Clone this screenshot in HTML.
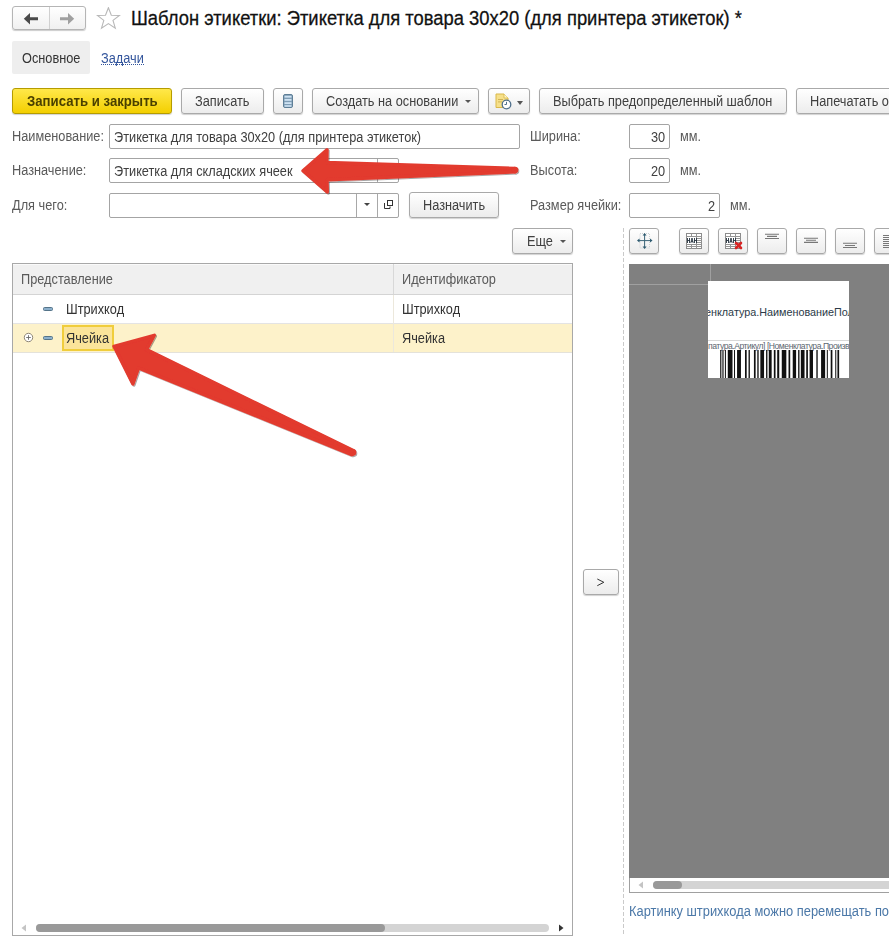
<!DOCTYPE html>
<html><head><meta charset="utf-8">
<style>
*{box-sizing:border-box}
html,body{margin:0;padding:0;width:889px;height:948px;overflow:hidden;background:#fff;font-family:"Liberation Sans",sans-serif;font-size:12.75px;color:#333}
.a{position:absolute}
.btn{position:absolute;height:26px;border:1px solid #a9a9a9;border-radius:3px;background:linear-gradient(#fff,#ececec);box-shadow:0 1px 1px rgba(0,0,0,.18);color:#404040;line-height:26px;text-align:center;white-space:nowrap}
.lbl{position:absolute;color:#5a5a5a;white-space:nowrap;line-height:16px}
.inp{position:absolute;height:25px;border:1px solid #a4a4a4;border-radius:2px;background:#fff;color:#404040;line-height:23px;padding-left:4px;white-space:nowrap;overflow:hidden}
.dd{position:absolute;width:0;height:0;border-left:3px solid transparent;border-right:3px solid transparent;border-top:3px solid #555}
.tb{position:absolute;top:228px;width:30px;height:26px;border:1px solid #a9a9a9;border-radius:3px;background:linear-gradient(#fff,#ececec);box-shadow:0 1px 1px rgba(0,0,0,.18)}
.t{display:inline-block;line-height:16px;will-change:transform;transform:translateY(0.8px) scaleY(1.12);transform-origin:50% 8px}
.btn .t{transform:translateY(-0.6px) scaleY(1.12)}
</style></head><body>

<!-- nav -->
<div class="a" style="left:12px;top:6px;width:74px;height:24px;border:1px solid #b5b5b5;border-radius:3px;background:linear-gradient(#fff,#f0f0f0);box-shadow:0 1px 1px rgba(0,0,0,.2)"></div>
<div class="a" style="left:49px;top:7px;width:1px;height:22px;background:#d0d0d0"></div>
<svg class="a" style="left:20px;top:10px" width="22" height="16" viewBox="0 0 22 16"><path d="M3.8 8.7 L10 3 L10 7.2 L18 7.2 L18 10.2 L10 10.2 L10 14.4 Z" fill="#4a4a4a"/></svg>
<svg class="a" style="left:56px;top:10px" width="22" height="16" viewBox="0 0 22 16"><path d="M18.2 8.7 L12 3 L12 7.2 L4 7.2 L4 10.2 L12 10.2 L12 14.4 Z" fill="#a0a0a0"/></svg>
<svg class="a" style="left:96px;top:7px" width="26" height="24" viewBox="0.6 0.8 26 24"><path d="M13 1.5 L15.9 9 L24 9.2 L17.6 14.2 L19.9 22 L13 17.4 L6.1 22 L8.4 14.2 L2 9.2 L10.1 9 Z" fill="none" stroke="#b8b8b8" stroke-width="1.1"/></svg>
<div class="a" style="left:131px;top:8px;font-size:18.4px;color:#111;white-space:nowrap;line-height:22px;-webkit-text-stroke:0.25px #111;transform:scaleY(1.06);transform-origin:0 18px">Шаблон этикетки: Этикетка для товара 30x20 (для принтера этикеток) *</div>

<!-- tabs -->
<div class="a" style="left:12px;top:41px;width:78px;height:33px;background:#eeeeee;border-radius:2px"></div>
<div class="a" style="left:22px;top:50px;color:#333;line-height:16px"><span class="t">Основное</span></div>
<div class="a" style="left:101px;top:50px;color:#33559c;line-height:16px;border-bottom:1px dotted #33559c;height:15px"><span class="t">Задачи</span></div>

<!-- toolbar -->
<div class="btn" style="left:12px;top:88px;width:160px;background:linear-gradient(#ffe84a,#f3cf00);border-color:#b59c00;font-weight:bold;color:#4a4000;font-size:13.2px"><span class="t">Записать и закрыть</span></div>
<div class="btn" style="left:181px;top:88px;width:83px"><span class="t">Записать</span></div>
<div class="btn" style="left:273px;top:88px;width:30px"></div>
<svg class="a" style="left:282px;top:93px" width="12" height="16" viewBox="0 0 12 16"><rect x="1.5" y="1.5" width="9" height="13" rx="1.5" fill="#7f9db5" stroke="#5f7f97" stroke-width="1"/><rect x="2.5" y="2.8" width="7" height="1.8" fill="#cfe3f3"/><rect x="2.5" y="6" width="7" height="1.8" fill="#cfe3f3"/><rect x="2.5" y="9.2" width="7" height="1.8" fill="#cfe3f3"/><rect x="2.5" y="12.2" width="7" height="1.6" fill="#cfe3f3"/></svg>
<div class="btn" style="left:312px;top:88px;width:167px;text-align:left;padding-left:13px"><span class="t">Создать на основании</span></div>
<div class="dd" style="left:465px;top:100px"></div>
<div class="btn" style="left:488px;top:88px;width:42px"></div>
<svg class="a" style="left:494px;top:92px" width="18" height="18" viewBox="0 0 18 18"><path d="M2 2 H10 L14 6 V15.5 H2 Z" fill="#f6e08a" stroke="#d9b84a" stroke-width="1"/><path d="M10 2 V6 H14" fill="#fff6c8" stroke="#d9b84a" stroke-width="0.8"/><rect x="4" y="7" width="5" height="0.8" fill="#c8a848"/><rect x="4" y="9.5" width="4" height="0.8" fill="#c8a848"/><circle cx="12.5" cy="12.5" r="4.3" fill="#fff" stroke="#50708c" stroke-width="1.3"/><path d="M12.5 9.8 V12.5 H10.5" fill="none" stroke="#50708c" stroke-width="1"/></svg>
<div class="dd" style="left:517px;top:101px;border-left-width:3.5px;border-right-width:3.5px;border-top-width:4px"></div>
<div class="btn" style="left:539px;top:88px;width:248px"><span class="t">Выбрать предопределенный шаблон</span></div>
<div class="btn" style="left:796px;top:88px;width:120px;text-align:left;padding-left:13px"><span class="t">Напечатать образец</span></div>

<!-- form -->
<div class="lbl" style="left:12px;top:128px"><span class="t">Наименование:</span></div>
<div class="inp" style="left:109px;top:124px;width:411px"><span class="t">Этикетка для товара 30x20 (для принтера этикеток)</span></div>
<div class="lbl" style="left:12px;top:162px"><span class="t">Назначение:</span></div>
<div class="inp" style="left:109px;top:158px;width:290px"><span class="t">Этикетка для складских ячеек</span></div>
<div class="a" style="left:377px;top:159px;width:1px;height:23px;background:#a8a8a8"></div>
<div class="lbl" style="left:12px;top:197px"><span class="t">Для чего:</span></div>
<div class="inp" style="left:109px;top:193px;width:290px"></div>
<div class="a" style="left:356px;top:194px;width:1px;height:23px;background:#a8a8a8"></div>
<div class="a" style="left:377px;top:194px;width:1px;height:23px;background:#a8a8a8"></div>
<div class="dd" style="left:364px;top:203px;border-left-width:3px;border-right-width:3px;border-top-width:3.5px;border-top-color:#444"></div>
<svg class="a" style="left:383px;top:199px" width="11" height="11" viewBox="0 0 11 11"><rect x="4.5" y="1.5" width="5" height="5" fill="none" stroke="#333" stroke-width="1"/><path d="M1.5 4 V9.5 H7 V7.5" fill="none" stroke="#333" stroke-width="1"/></svg>
<div class="btn" style="left:409px;top:192px;width:90px"><span class="t">Назначить</span></div>

<div class="lbl" style="left:530px;top:128px"><span class="t">Ширина:</span></div>
<div class="inp" style="left:629px;top:124px;width:41px;text-align:right;padding-right:4px"><span class="t">30</span></div>
<div class="lbl" style="left:680px;top:128px"><span class="t">мм.</span></div>
<div class="lbl" style="left:530px;top:162px"><span class="t">Высота:</span></div>
<div class="inp" style="left:629px;top:158px;width:41px;text-align:right;padding-right:4px"><span class="t">20</span></div>
<div class="lbl" style="left:680px;top:162px"><span class="t">мм.</span></div>
<div class="lbl" style="left:530px;top:197px"><span class="t">Размер ячейки:</span></div>
<div class="inp" style="left:629px;top:193px;width:91px;text-align:right;padding-right:4px"><span class="t">2</span></div>
<div class="lbl" style="left:730px;top:197px"><span class="t">мм.</span></div>

<!-- more -->
<div class="btn" style="left:512px;top:228px;width:61px;text-align:left;padding-left:14px"><span class="t">Еще</span></div>
<div class="dd" style="left:560px;top:240px"></div>

<!-- table -->
<div class="a" style="left:12px;top:263px;width:561px;height:673px;border:1px solid #a8a8a8;background:#fff"></div>
<div class="a" style="left:13px;top:264px;width:559px;height:31px;background:#f0f0f0;border-top:1px solid #fafafa;border-bottom:1px solid #d4d4d4"></div>
<div class="a" style="left:393px;top:264px;width:1px;height:30px;background:#d8d8d8"></div>
<div class="lbl" style="left:21px;top:271px"><span class="t">Представление</span></div>
<div class="lbl" style="left:402px;top:271px"><span class="t">Идентификатор</span></div>
<div class="a" style="left:13px;top:323px;width:559px;height:1px;background:#e4e4e4"></div>
<div class="a" style="left:13px;top:324px;width:559px;height:29px;background:#fdf2ca;border-bottom:1px solid #e4e2da"></div>
<div class="a" style="left:393px;top:295px;width:1px;height:57px;background:#ece8dc"></div>
<div class="a" style="left:43px;top:307px;width:10px;height:4px;background:#8cb0cc;border:1px solid #557489;border-radius:1.5px"></div>
<div class="lbl" style="left:66px;top:301px;color:#333"><span class="t">Штрихкод</span></div>
<div class="lbl" style="left:402px;top:301px;color:#333"><span class="t">Штрихкод</span></div>
<svg class="a" style="left:23px;top:332px" width="11" height="11" viewBox="0 0 11 11"><circle cx="5.5" cy="5.5" r="4.2" fill="#fff" stroke="#8f8676" stroke-width="1"/><path d="M5.5 3.2 V7.8 M3.2 5.5 H7.8" stroke="#6a6a6a" stroke-width="0.9"/></svg>
<div class="a" style="left:43px;top:336px;width:10px;height:4px;background:#8cb0cc;border:1px solid #557489;border-radius:1.5px"></div>
<div class="a" style="left:62px;top:325px;width:52px;height:26px;border:2px solid #f0cd3c;background:#fbe49a"></div>
<div class="lbl" style="left:66px;top:330px;color:#333"><span class="t">Ячейка</span></div>
<div class="lbl" style="left:402px;top:330px;color:#333"><span class="t">Ячейка</span></div>
<!-- table scrollbar -->
<div class="a" style="left:36px;top:924px;width:513px;height:8px;background:#d4d4d4;border-radius:4px"></div>
<div class="a" style="left:36px;top:924px;width:349px;height:8px;background:#999;border-radius:4px"></div>

<svg class="a" style="left:21px;top:924px" width="6" height="8" viewBox="0 0 6 8"><path d="M5 0.5 V7.5 L0.5 4 Z" fill="#c4c4c4"/></svg>
<svg class="a" style="left:558px;top:924px" width="6" height="8" viewBox="0 0 6 8"><path d="M1 0.5 V7.5 L5.5 4 Z" fill="#333"/></svg>
<!-- > button -->
<div class="btn" style="left:583px;top:569px;width:36px"></div>
<svg class="a" style="left:596px;top:578px" width="10" height="9" viewBox="0 0 10 9"><path d="M1.3 1 L7.8 4.3 L1.3 7.7" fill="none" stroke="#2a2a2a" stroke-width="0.95"/></svg>
<!-- dashed -->
<div class="a" style="left:623px;top:228px;width:1px;height:706px;background:repeating-linear-gradient(#cacaca 0 4px,transparent 4px 6px)"></div>

<!-- right toolbar -->
<div class="tb" style="left:629px"></div>
<div class="tb" style="left:679px"></div>
<div class="tb" style="left:718px"></div>
<div class="tb" style="left:757px"></div>
<div class="tb" style="left:796px"></div>
<div class="tb" style="left:835px"></div>
<div class="tb" style="left:874px"></div>


<svg class="a" style="left:636px;top:232px" width="18" height="18" viewBox="0 0 18 18"><rect x="4" y="1.5" width="9.5" height="14.5" fill="none" stroke="#c0c8cc" stroke-width="0.8" stroke-dasharray="1 1"/><path d="M8.6 2.5 V15.5 M2 8.6 H15.5" stroke="#3a6478" stroke-width="1"/><path d="M8.6 1 L6.6 3.5 H10.6 Z M8.6 17 L6.6 14.5 H10.6 Z M1 8.6 L3.5 6.6 V10.6 Z M16.5 8.6 L14 6.6 V10.6 Z" fill="#2d5a70"/></svg>
<svg class="a" style="left:686px;top:233px" width="17" height="17" viewBox="0 0 17 17"><rect x="0.5" y="0.5" width="15" height="15" fill="#fff" stroke="#8c8c8c" stroke-width="1"/><path d="M0.5 3.5 H15.5 M5.5 0.5 V3.5 M10.5 0.5 V15.5 M10.5 5.5 H15.5 M10.5 7.5 H15.5 M10.5 9.5 H15.5 M0.5 11.5 H15.5 M0.5 13.5 H15.5 M5.5 11.5 V15.5" stroke="#959595" stroke-width="1" fill="none"/><path d="M1.5 5 V10 M3.5 5 V10 M1.5 7.5 H3.5 M4.8 10 L6 5 L7.2 10 M5.2 8.5 H6.8 M8.5 5 V10 M10.5 5 V10 M8.5 7.5 H10.5" stroke="#22303c" stroke-width="0.9" fill="none"/></svg>
<svg class="a" style="left:725px;top:233px" width="20" height="19" viewBox="0 0 20 19"><rect x="0.5" y="0.5" width="15" height="15" fill="#fff" stroke="#8c8c8c" stroke-width="1"/><path d="M0.5 3.5 H15.5 M5.5 0.5 V3.5 M10.5 0.5 V15.5 M10.5 5.5 H15.5 M10.5 7.5 H15.5 M10.5 9.5 H15.5 M0.5 11.5 H15.5 M0.5 13.5 H15.5 M5.5 11.5 V15.5" stroke="#959595" stroke-width="1" fill="none"/><path d="M1.5 5 V10 M3.5 5 V10 M1.5 7.5 H3.5 M4.8 10 L6 5 L7.2 10 M5.2 8.5 H6.8 M8.5 5 V10 M10.5 5 V10 M8.5 7.5 H10.5" stroke="#22303c" stroke-width="0.9" fill="none"/><path d="M11 10 L16 15 M16 10 L11 15" stroke="#d82424" stroke-width="2.6" stroke-linecap="round"/></svg>
<svg class="a" style="left:757px;top:228px" width="30" height="25" viewBox="0 0 30 25"><path d="M8 6.3 H22 M10 8.4 H20 M8 10.5 H22" stroke="#777" stroke-width="1.1"/></svg>
<svg class="a" style="left:796px;top:228px" width="30" height="25" viewBox="0 0 30 25"><path d="M8 10.3 H22 M10 12.3 H20 M8 14.4 H22" stroke="#777" stroke-width="1.1"/></svg>
<svg class="a" style="left:835px;top:228px" width="30" height="25" viewBox="0 0 30 25"><path d="M8 15.3 H22 M10 17.5 H20 M8 19.5 H22" stroke="#777" stroke-width="1.1"/></svg>
<svg class="a" style="left:874px;top:228px" width="15" height="25" viewBox="0 0 15 25"><path d="M9 7.5 H15 M9 9.5 H15 M9 11.5 H15 M9 13.5 H15 M9 15.5 H15 M9 17.5 H15 M9 19.5 H15" stroke="#777" stroke-width="1"/></svg>

<!-- gray area -->
<div class="a" style="left:629px;top:264px;width:260px;height:629px;border:1px solid #a0a0a0;border-right:none;background:#fff"></div>
<div class="a" style="left:629px;top:264px;width:260px;height:614px;background:#808080"></div>
<div class="a" style="left:629px;top:284px;width:80px;height:1px;background:#a0a0a0"></div>
<div class="a" style="left:710px;top:264px;width:1px;height:19px;background:#a0a0a0"></div>
<div class="a" style="left:708px;top:281px;width:141px;height:97px;background:#fff;overflow:hidden">
<div class="a" style="left:-3px;top:25px;font-size:10.8px;color:#2b3a48;white-space:nowrap;line-height:13px">енклатура.НаименованиеПолное</div>
<div class="a" style="left:0;top:59px;width:141px;height:1px;background:#d8d8d8"></div>
<div class="a" style="left:0px;top:60px;font-size:8.6px;color:#5d6670;white-space:nowrap;line-height:10px;letter-spacing:-0.46px">патура.Артикул] [Номенклатура.Производитель]</div>
<svg class="a" style="left:0;top:69px" width="141" height="28" viewBox="0 0 141 28"><rect x="12.18" y="0" width="1.18" height="28" fill="#111"/><rect x="14.38" y="0" width="1.18" height="28" fill="#111"/><rect x="16.91" y="0" width="1.01" height="28" fill="#111"/><rect x="19.78" y="0" width="4.72" height="28" fill="#111"/><rect x="26.02" y="0" width="1.01" height="28" fill="#111"/><rect x="29.06" y="0" width="3.88" height="28" fill="#111"/><rect x="36.99" y="0" width="1.69" height="28" fill="#111"/><rect x="40.53" y="0" width="1.35" height="28" fill="#111"/><rect x="45.93" y="0" width="1.69" height="28" fill="#111"/><rect x="49.30" y="0" width="1.35" height="28" fill="#111"/><rect x="52.34" y="0" width="3.71" height="28" fill="#111"/><rect x="58.08" y="0" width="1.35" height="28" fill="#111"/><rect x="60.78" y="0" width="2.87" height="28" fill="#111"/><rect x="65.84" y="0" width="1.69" height="28" fill="#111"/><rect x="69.21" y="0" width="2.02" height="28" fill="#111"/><rect x="73.77" y="0" width="4.56" height="28" fill="#111"/><rect x="80.52" y="0" width="1.69" height="28" fill="#111"/><rect x="84.73" y="0" width="3.37" height="28" fill="#111"/><rect x="90.13" y="0" width="1.35" height="28" fill="#111"/><rect x="92.83" y="0" width="3.71" height="28" fill="#111"/><rect x="98.23" y="0" width="1.69" height="28" fill="#111"/><rect x="101.61" y="0" width="3.37" height="28" fill="#111"/><rect x="108.35" y="0" width="1.35" height="28" fill="#111"/><rect x="113.08" y="0" width="4.05" height="28" fill="#111"/><rect x="118.82" y="0" width="1.01" height="28" fill="#111"/><rect x="122.70" y="0" width="1.69" height="28" fill="#111"/><rect x="127.25" y="0" width="1.01" height="28" fill="#111"/><rect x="129.44" y="0" width="1.69" height="28" fill="#111"/></svg>
</div>
<div class="a" style="left:653px;top:881px;width:240px;height:8px;background:#d4d4d4;border-radius:4px"></div>
<div class="a" style="left:653px;top:881px;width:29px;height:8px;background:#999;border-radius:4px"></div>

<svg class="a" style="left:638px;top:881px" width="6" height="8" viewBox="0 0 6 8"><path d="M5 0.5 V7.5 L0.5 4 Z" fill="#c4c4c4"/></svg>
<div class="a" style="left:629px;top:903px;color:#4b78a8;white-space:nowrap;line-height:16px;font-size:12.88px"><span class="t">Картинку штрихкода можно перемещать по</span></div>


<!-- arrows -->
<svg class="a" style="left:0;top:0" width="889" height="948" viewBox="0 0 889 948">
<defs><filter id="sh" x="-5%" y="-5%" width="110%" height="110%"><feGaussianBlur in="SourceAlpha" stdDeviation="0.6"/><feOffset dx="1" dy="1.2"/><feComponentTransfer><feFuncA type="linear" slope="0.35"/></feComponentTransfer><feMerge><feMergeNode/><feMergeNode in="SourceGraphic"/></feMerge></filter></defs>
<g filter="url(#sh)" fill="#e23a2f" stroke="#e23a2f" stroke-width="3.4" stroke-linejoin="round">
<path d="M303 170.8 L327 149.8 L326.8 162.5 L515 168.4 L515 171.9 L327 179.8 L327.3 192 Z"/>
<circle cx="515" cy="170.1" r="1.6"/>
<path d="M114 346.3 L154.3 335.3 L146.5 349.6 L353.8 450.9 L351.8 454.6 L138.5 368 L132.9 384 Z"/>
<circle cx="353" cy="452.6" r="1.6"/>
</g>
</svg>
</body></html>
